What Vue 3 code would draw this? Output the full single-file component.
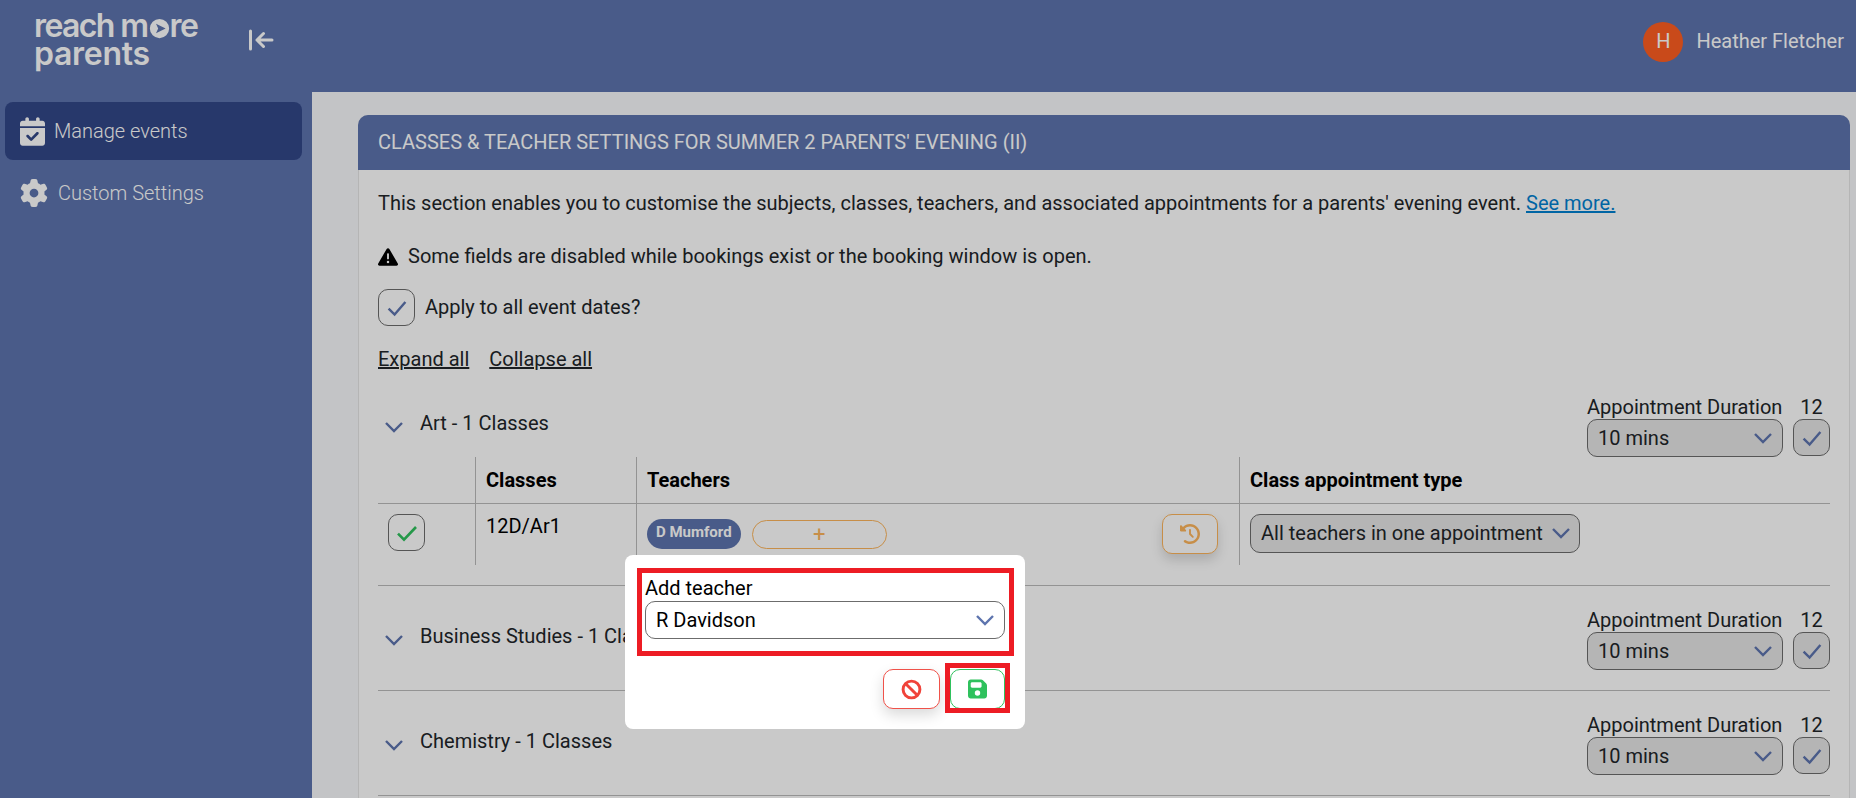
<template>
  <div class="page">
    <header class="topbar">
      <div class="logo">
        <div class="logo-line">reach m<svg class="logo-o" viewBox="0 0 24 24"><path d="M12 1a11 11 0 1 0 0 22 11 11 0 0 0 0-22zM8 6.500l11 5.500-11 5.500 2.500-5.500z" fill-rule="evenodd" /></svg>re</div>
        <div class="logo-line wide">parents</div>
      </div>
      <svg class="collapse" viewBox="0 0 26 22">
        <path d="M2.500 2v18M24 11H9M15.500 4.500 9 11l6.500 6.500" />
      </svg>
      <div class="user">
        <span class="avatar">H</span>
        <span>Heather Fletcher</span>
      </div>
    </header>

    <aside class="sidebar">
      <a class="nav-item active">
        <svg class="nav-icon" viewBox="0 0 448 512"><path d="M128 0c17.700 0 32 14.300 32 32V64H288V32c0-17.700 14.300-32 32-32s32 14.300 32 32V64h48c26.500 0 48 21.500 48 48v48H0V112C0 85.500 21.500 64 48 64H96V32c0-17.700 14.300-32 32-32zM0 192H448V464c0 26.500-21.500 48-48 48H48c-26.500 0-48-21.500-48-48V192zM329 305c9.400-9.400 9.400-24.600 0-33.900s-24.600-9.400-33.900 0l-95 95-47-47c-9.400-9.400-24.600-9.400-33.900 0s-9.400 24.600 0 33.900l64 64c9.400 9.400 24.600 9.400 33.900 0L329 305z" /></svg>
        Manage events
      </a>
      <a class="nav-item">
        <svg class="nav-icon gear" viewBox="0 0 512 512"><path d="M495.900 166.600c3.200 8.700 .5 18.400-6.400 24.600l-43.300 39.400c1.100 8.300 1.700 16.800 1.700 25.400s-.6 17.100-1.700 25.400l43.300 39.400c6.900 6.200 9.600 15.900 6.400 24.600c-4.400 11.900-9.700 23.300-15.800 34.300l-4.700 8.100c-6.600 11-14 21.400-22.100 31.200c-5.900 7.200-15.700 9.600-24.500 6.800l-55.700-17.700c-13.400 10.300-28.200 18.900-44 25.400l-12.500 57.100c-2 9.100-9 16.300-18.200 17.800c-13.800 2.300-28 3.500-42.500 3.500s-28.700-1.200-42.500-3.500c-9.200-1.500-16.200-8.700-18.200-17.800l-12.500-57.100c-15.800-6.500-30.600-15.100-44-25.400L83.100 425.900c-8.800 2.800-18.600 .3-24.500-6.800c-8.100-9.800-15.500-20.200-22.100-31.200l-4.700-8.100c-6.100-11-11.400-22.400-15.800-34.300c-3.200-8.700-.5-18.400 6.400-24.600l43.300-39.400C64.600 273.100 64 264.600 64 256s.6-17.100 1.700-25.400L22.400 191.200c-6.900-6.200-9.600-15.900-6.400-24.600c4.400-11.900 9.700-23.300 15.800-34.300l4.700-8.100c6.600-11 14-21.400 22.100-31.200c5.900-7.200 15.700-9.600 24.500-6.800l55.700 17.700c13.400-10.300 28.200-18.900 44-25.400l12.500-57.100c2-9.100 9-16.300 18.200-17.800C227.300 1.200 241.500 0 256 0s28.700 1.200 42.500 3.500c9.200 1.500 16.200 8.700 18.200 17.800l12.500 57.100c15.800 6.500 30.600 15.100 44 25.400l55.700-17.700c8.800-2.800 18.600-.3 24.500 6.800c8.100 9.800 15.500 20.200 22.100 31.200l4.700 8.100c6.100 11 11.400 22.400 15.800 34.300zM256 336a80 80 0 1 0 0-160 80 80 0 1 0 0 160z" /></svg>
        Custom Settings
      </a>
    </aside>

    <main class="content">
      <section class="card">
        <div class="card-head">Classes &amp; Teacher Settings for Summer 2 Parents' Evening (II)</div>
        <div class="card-body">
          <p class="intro">This section enables you to customise the subjects, classes, teachers, and associated appointments for a parents' evening event. <a class="see-more">See more.</a></p>
          <p class="warning">
            <svg class="warn-icon" viewBox="0 0 512 512"><path d="M256 32c14.200 0 27.300 7.500 34.500 19.800l216 368c7.300 12.400 7.300 27.700 .2 40.100S486.300 480 472 480H40c-14.300 0-27.600-7.700-34.700-20.100s-7-27.800 .2-40.100l216-368C228.700 39.500 241.800 32 256 32zm0 128c-13.300 0-24 10.700-24 24V296c0 13.300 10.700 24 24 24s24-10.700 24-24V184c0-13.300-10.700-24-24-24zm32 224a32 32 0 1 0 -64 0 32 32 0 1 0 64 0z" /></svg>
            Some fields are disabled while bookings exist or the booking window is open.
          </p>
          <div class="apply">
            <span class="check-box"><svg viewBox="0 0 20 20"><path d="M3 10.500 8 15.500l9-10.500" /></svg></span>
            Apply to all event dates?
          </div>
          <div class="links">
            <a>Expand all</a>
            <a>Collapse all</a>
          </div>

          <div v-for="subject in subjects" :key="subject.name" class="subject">
            <div class="subject-head">
              <svg class="chevron" viewBox="0 0 18 12"><path d="M1 2 9 10l8-8" /></svg>
              <span class="subject-name">{{ subject.name }} - {{ subject.classes.length }} Classes</span>
              <div class="duration">
                <label>Appointment Duration</label>
                <span class="year">12</span>
                <div class="select-wrap">
                  <select class="select" disabled><option>10 mins</option></select>
                  <svg class="select-arrow" viewBox="0 0 18 12"><path d="M1 2 9 10l8-8" /></svg>
                </div>
                <span class="check-box small"><svg viewBox="0 0 20 20"><path d="M3 10.500 8 15.500l9-10.500" /></svg></span>
              </div>
            </div>

            <div v-if="subject.open" class="class-table">
              <div class="cell th"></div>
              <div class="cell th">Classes</div>
              <div class="cell th">Teachers</div>
              <div class="cell th">Class appointment type</div>
              <template v-for="row in subject.classes" :key="row.code">
                <div class="cell td">
                  <span class="check-box green"><svg viewBox="0 0 20 20"><path d="M2.500 10.500 7.500 15.500 17.500 5" /></svg></span>
                </div>
                <div class="cell td code">{{ row.code }}</div>
                <div class="cell td teachers">
                  <span class="chip">{{ row.teacher }}</span>
                  <button class="add-btn">+</button>
                  <button class="history-btn">
                    <svg viewBox="0 0 512 512"><path d="M75 75L41 41C25.900 25.900 0 36.600 0 57.900V168c0 13.300 10.700 24 24 24H134.100c21.400 0 32.100-25.900 17-41l-30.800-30.800C155 85.500 203 64 256 64c106 0 192 86 192 192s-86 192-192 192c-40.800 0-78.600-12.700-109.700-34.400c-14.500-10.100-34.400-6.600-44.600 7.900s-6.600 34.400 7.900 44.600C151.200 495 201.700 512 256 512c141.400 0 256-114.600 256-256S397.400 0 256 0C185.300 0 121.300 28.700 75 75zm181 53c-13.300 0-24 10.700-24 24V256c0 6.400 2.500 12.500 7 17l72 72c9.400 9.400 24.600 9.400 33.900 0s9.400-24.600 0-33.900l-65-65V152c0-13.300-10.700-24-24-24z" /></svg>
                  </button>
                </div>
                <div class="cell td">
                  <div class="select-wrap type">
                    <select class="select" disabled><option>All teachers in one appointment</option></select>
                    <svg class="select-arrow" viewBox="0 0 18 12"><path d="M1 2 9 10l8-8" /></svg>
                  </div>
                </div>
              </template>
            </div>
          </div>
        </div>
      </section>
    </main>

    <div class="overlay"></div>

    <div class="popover">
      <label class="pop-label">Add teacher</label>
      <div class="select-wrap">
        <select class="select light"><option>R Davidson</option></select>
        <svg class="select-arrow" viewBox="0 0 18 12"><path d="M1 2 9 10l8-8" /></svg>
      </div>
      <div class="pop-actions">
        <button class="pop-btn cancel">
          <svg viewBox="0 0 20 20"><circle cx="10" cy="10" r="8" /><path d="M4.500 4.500l11 11" /></svg>
        </button>
        <button class="pop-btn save">
          <svg viewBox="0 0 448 512"><path d="M64 32C28.700 32 0 60.700 0 96V416c0 35.300 28.700 64 64 64H384c35.300 0 64-28.700 64-64V173.300c0-17-6.700-33.300-18.700-45.300L352 50.700C340 38.700 323.700 32 306.700 32H64zm0 96c0-17.700 14.300-32 32-32H288c17.700 0 32 14.300 32 32v64c0 17.700-14.300 32-32 32H96c-17.700 0-32-14.300-32-32V128zM224 288a64 64 0 1 1 0 128 64 64 0 1 1 0-128z" /></svg>
        </button>
      </div>
      <span class="mark mark-field"></span>
      <span class="mark mark-save"></span>
    </div>
  </div>
</template>

<script setup>
const subjects = [
  { name: 'Art', open: true, classes: [{ code: '12D/Ar1', teacher: 'D Mumford' }] },
  { name: 'Business Studies', open: false, classes: [{ code: '12A/Bs1', teacher: 'R Davidson' }] },
  { name: 'Chemistry', open: false, classes: [{ code: '12B/Ch1', teacher: 'S Hall' }] }
]
</script>

<style>
html,
body {
  margin: 0;
  height: 100%;
  overflow: hidden;
}
</style>

<style scoped>
.page {
  position: relative;
  display: grid;
  grid-template-columns: 312px 1fr;
  grid-template-rows: 92px 1fr;
  height: 100vh;
  overflow: hidden;
  font-family: Roboto, "Liberation Sans", sans-serif;
  font-size: 20px;
  line-height: 27px;
  color: #212529;
  background: #f8f9fc;
}

.topbar {
  grid-column: 1 / 3;
  display: flex;
  align-items: center;
  padding: 0 12px 0 34px;
  background: #5d74ae;
  color: #fff;
}

.logo {
  width: 214px;
  font-family: Inter, sans-serif;
  font-weight: 600;
  font-size: 32px;
  line-height: 28px;
  letter-spacing: -1.6px;
  margin-top: -12px;
}

.logo-line {
  white-space: nowrap;
}

.logo-line.wide {
  letter-spacing: -0.3px;
}

.logo-o {
  width: 21px;
  height: 21px;
  fill: #fff;
  vertical-align: -2px;
  margin: 0 0 0 1px;
}

.collapse {
  width: 26px;
  height: 22px;
  fill: none;
  stroke: #fff;
  stroke-width: 3;
  stroke-linecap: round;
  stroke-linejoin: round;
  margin-top: -13px;
}

.user {
  margin-left: auto;
  display: flex;
  align-items: center;
  gap: 13px;
  margin-top: -9px;
}

.avatar {
  width: 40px;
  height: 40px;
  border-radius: 50%;
  background: #ff5e21;
  display: flex;
  align-items: center;
  justify-content: center;
}

.sidebar {
  background: #5d74ae;
  padding: 10px 10px 0 5px;
  display: flex;
  flex-direction: column;
  gap: 4px;
}

.nav-item {
  display: flex;
  align-items: center;
  height: 58px;
  padding-left: 15px;
  gap: 9px;
  border-radius: 8px;
  color: #fff;
  font-weight: 300;
}

.nav-item.active {
  background: #324788;
}

.nav-icon {
  width: 25px;
  height: 29px;
  fill: #fff;
}

.nav-icon.gear {
  width: 28px;
  height: 28px;
  margin-right: 1px;
}

.content {
  padding: 23px 6px 0 46px;
  min-width: 0;
}

.card {
  background: #fff;
  border: 1px solid #e6e6e6;
  border-radius: 10px;
}

.card-head {
  height: 55px;
  margin: -1px -1px 0;
  padding: 0 20px;
  display: flex;
  align-items: center;
  background: #5d74ae;
  border-radius: 10px 10px 0 0;
  color: #fff;
  text-transform: uppercase;
}

.card-body {
  padding: 20px 19px 40px;
}

.intro {
  margin: 0 0 26px;
}

.see-more {
  color: #0080d0;
  text-decoration: underline;
}

.warning {
  margin: 0 0 19px;
  display: flex;
  align-items: center;
  gap: 10px;
}

.warn-icon {
  width: 20px;
  height: 20px;
}

.apply {
  display: flex;
  align-items: center;
  gap: 10px;
  margin-bottom: 20px;
}

.check-box {
  box-sizing: border-box;
  flex: none;
  width: 37px;
  height: 37px;
  border: 1px solid #6c6c6c;
  border-radius: 10px;
  display: flex;
  align-items: center;
  justify-content: center;
}

.check-box svg {
  width: 24px;
  height: 24px;
  fill: none;
  stroke: #5d74ae;
  stroke-width: 2;
}

.check-box.small {
  background: #e6e6e6;
}

.check-box.green svg {
  stroke: #2fc15d;
  stroke-width: 2.200;
}

.links {
  display: flex;
  gap: 20px;
}

.links a {
  text-decoration: underline;
}

.subject {
  padding: 23px 0 20px;
  border-bottom: 1px solid #bbb;
}

.subject:first-of-type {
  padding-top: 22px;
  padding-bottom: 18px;
}

.subject-head {
  display: flex;
  align-items: center;
}

.subject-name {
  margin-bottom: 6px;
}

.chevron {
  width: 18px;
  height: 12px;
  margin: 0 17px 0 7px;
  fill: none;
  stroke: #5d74ae;
  stroke-width: 2.400;
}

.duration {
  margin-left: auto;
  display: grid;
  grid-template-columns: 196px 37px;
  column-gap: 10px;
  line-height: 23px;
}

.year {
  text-align: center;
}

.select-wrap {
  position: relative;
}

.select {
  box-sizing: border-box;
  display: block;
  width: 100%;
  height: 38px;
  padding: 0 30px 0 10px;
  appearance: none;
  border: 1px solid #6c6c6c;
  border-radius: 10px;
  background: #e6e6e6;
  color: #212529;
  opacity: 1;
  font: inherit;
}

.select.light {
  background: #fff;
  color: #000;
}

.select-arrow {
  position: absolute;
  right: 11px;
  top: 13px;
  width: 18px;
  height: 12px;
  fill: none;
  stroke: #5d74ae;
  stroke-width: 2.400;
  pointer-events: none;
}

.class-table {
  display: grid;
  grid-template-columns: 97px 161px 603px 1fr;
}

.cell {
  box-sizing: border-box;
  padding: 0 10px;
}

.cell + .cell:not(:nth-child(4n + 1)) {
  border-left: 1px solid #bbb;
}

.th {
  height: 47px;
  padding-top: 10px;
  font-weight: 700;
  color: #000;
  border-bottom: 1px solid #bbb;
}

.td {
  height: 61px;
  padding-top: 10px;
}

.td.code {
  padding-top: 9px;
  color: #000;
}

.teachers {
  display: flex;
  align-items: flex-start;
}

.chip {
  margin-top: 5px;
  height: 30px;
  padding: 0 9px;
  border-radius: 15px;
  background: #5d74ae;
  color: #fff;
  font-size: 15px;
  font-weight: 700;
  line-height: 27px;
}

.add-btn {
  margin: 6px 0 0 11px;
  width: 135px;
  height: 29px;
  border: 1px solid #fdb55c;
  border-radius: 15px;
  background: #fff;
  color: #fdb55c;
  font: 400 22px/1 Roboto, sans-serif;
}

.history-btn {
  margin: 0 11px 0 auto;
  width: 56px;
  height: 40px;
  border: 1px solid #fdb55c;
  border-radius: 10px;
  background: #fff;
  box-shadow: 0 6px 12px rgba(0, 0, 0, 0.15);
  display: flex;
  align-items: center;
  justify-content: center;
}

.history-btn svg {
  width: 20px;
  height: 20px;
  fill: #fdb55c;
}

.select-wrap.type {
  width: 330px;
}

.type .select {
  height: 39px;
}

.type .select-arrow {
  right: 10px;
}

.overlay {
  position: absolute;
  inset: 0;
  background: rgba(0, 0, 0, 0.21);
}

.popover {
  position: absolute;
  left: 625px;
  top: 555px;
  box-sizing: border-box;
  width: 400px;
  height: 174px;
  padding: 20px 20px 0;
  background: #fff;
  border-radius: 8px;
  color: #000;
}

.pop-label {
  display: block;
  line-height: 26px;
}

.pop-actions {
  display: flex;
  justify-content: flex-end;
  gap: 10px;
  margin-top: 30px;
}

.pop-btn {
  box-sizing: border-box;
  height: 40px;
  border-radius: 10px;
  background: #fff;
  display: flex;
  align-items: center;
  justify-content: center;
  padding: 0;
}

.cancel {
  width: 57px;
  border: 1px solid #f0524a;
  box-shadow: 0 6px 14px rgba(0, 0, 0, 0.15);
}

.cancel svg {
  width: 21px;
  height: 21px;
  fill: none;
  stroke: #f0433a;
  stroke-width: 2.800;
}

.save {
  width: 55px;
  border: 1px solid #2fc15d;
}

.save svg {
  width: 19px;
  height: 22px;
  fill: #2fc15d;
}

.mark {
  position: absolute;
  box-sizing: border-box;
  border: 5px solid #ed1c24;
  pointer-events: none;
}

.mark-field {
  left: 12px;
  top: 13px;
  width: 377px;
  height: 88px;
}

.mark-save {
  left: 320px;
  top: 108px;
  width: 65px;
  height: 50px;
}
</style>
